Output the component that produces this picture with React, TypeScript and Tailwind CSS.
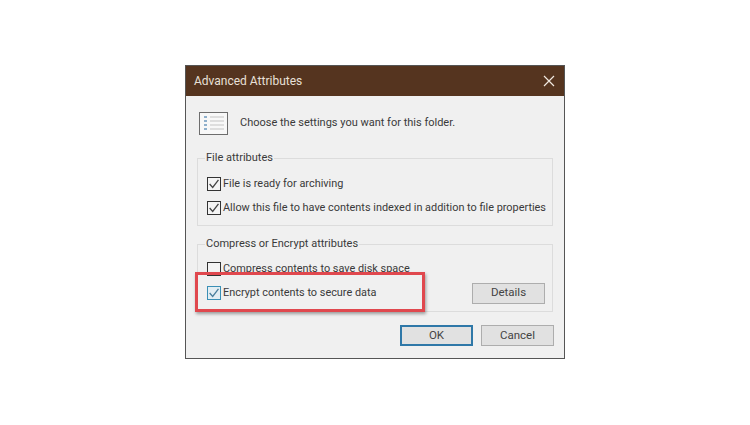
const FONT = "font-['Roboto',sans-serif]";

function Check({ checked, blue }: { checked?: boolean; blue?: boolean }) {
  return (
    <span className={`flex h-[14px] w-[14px] shrink-0 items-center justify-center border ${blue ? 'border-[#3a8fb5] bg-[#e3eef3]' : 'border-[#333333] bg-[#f4f4f4]'}`}>
      {checked && (
        <svg width="12" height="12" viewBox="0 0 11 11" fill="none">
          <path d="M1.5 5.5 L4.3 8.6 L9.6 1.8" stroke={blue ? '#4a7f9c' : '#444444'} strokeWidth="1.2" />
        </svg>
      )}
    </span>
  );
}

function Row({ label, checked, blue }: { label: string; checked?: boolean; blue?: boolean }) {
  return (
    <div className="flex h-[24px] items-center gap-[2px] pl-[9px]">
      <Check checked={checked} blue={blue} />
      <span className="text-[10.9px] leading-none whitespace-nowrap text-[#3a3a3a]">{label}</span>
    </div>
  );
}

function Btn({ label, primary }: { label: string; primary?: boolean }) {
  return (
    <div className={`flex h-[21px] w-[73px] items-center justify-center text-[11.5px] text-[#444444] bg-[#e1e1e1] ${primary ? 'border-2 border-[#2f78a8]' : 'border border-[#adadad]'}`}>
      {label}
    </div>
  );
}

export default function App() {
  return (
    <div className={`relative h-[425px] w-[750px] overflow-hidden bg-white pl-[185px] pt-[65px] ${FONT}`}>
      <div className="flex h-[294px] w-[380px] flex-col border border-[#555555] bg-[#f0f0f0]">
        <div className="flex h-[30px] shrink-0 items-center justify-between bg-[#55341f] pl-[8px] pr-[9px]">
          <span className="text-[12px] text-[#e8e0d8]">Advanced Attributes</span>
          <svg width="12" height="12" viewBox="0 0 12 12" fill="none">
            <path d="M1 1 L11 11 M11 1 L1 11" stroke="#f0e8e0" strokeWidth="1.2" />
          </svg>
        </div>

        <div className="flex flex-col pl-[11px] pr-[11px]">
          <div className="mt-[15px] flex h-[24px] items-center gap-[12px] pl-[2px]">
            <svg width="29" height="23" viewBox="0 0 29 23" fill="none">
              <rect x="0.5" y="0.5" width="28" height="22" fill="#f8f8f8" stroke="#6d6d6d" />
              <path d="M5 5 h3 M5 9 h3 M5 13 h3 M5 17 h3" stroke="#8fb0cc" strokeWidth="2" />
              <path d="M11 5 h14 M11 9 h14 M11 13 h14 M11 17 h14" stroke="#c4c4c4" />
            </svg>
            <span className="text-[11px] text-[#3a3a3a]">Choose the settings you want for this folder.</span>
          </div>

          <fieldset className="mt-[15px] h-[76px] w-[356px] min-w-0 border border-[#dcdcdc] pt-[6px]">
            <legend className="ml-[7px] px-[1px] text-[11px] leading-[16px] text-[#3a3a3a]">File attributes</legend>
            <Row label="File is ready for archiving" checked />
            <Row label="Allow this file to have contents indexed in addition to file properties" checked />
          </fieldset>

          <fieldset className="mt-[10px] h-[76px] w-[356px] min-w-0 border border-[#dcdcdc] pt-[5px]">
            <legend className="ml-[7px] px-[1px] text-[11px] leading-[16px] text-[#3a3a3a]">Compress or Encrypt attributes</legend>
            <Row label="Compress contents to save disk space" />
            <div className="flex items-center justify-between pr-[7px]">
              <Row label="Encrypt contents to secure data" checked blue />
              <Btn label="Details" />
            </div>
          </fieldset>

          <div className="mt-[13px] mr-[-1px] flex justify-end gap-[8px]">
            <Btn label="OK" primary />
            <Btn label="Cancel" />
          </div>
        </div>
      </div>

      <div className="absolute left-[195px] top-[272px] h-[40px] w-[230px] border-[3px] border-[#e0484e] shadow-[1px_2px_3px_rgba(0,0,0,0.35)]" />
    </div>
  );
}
